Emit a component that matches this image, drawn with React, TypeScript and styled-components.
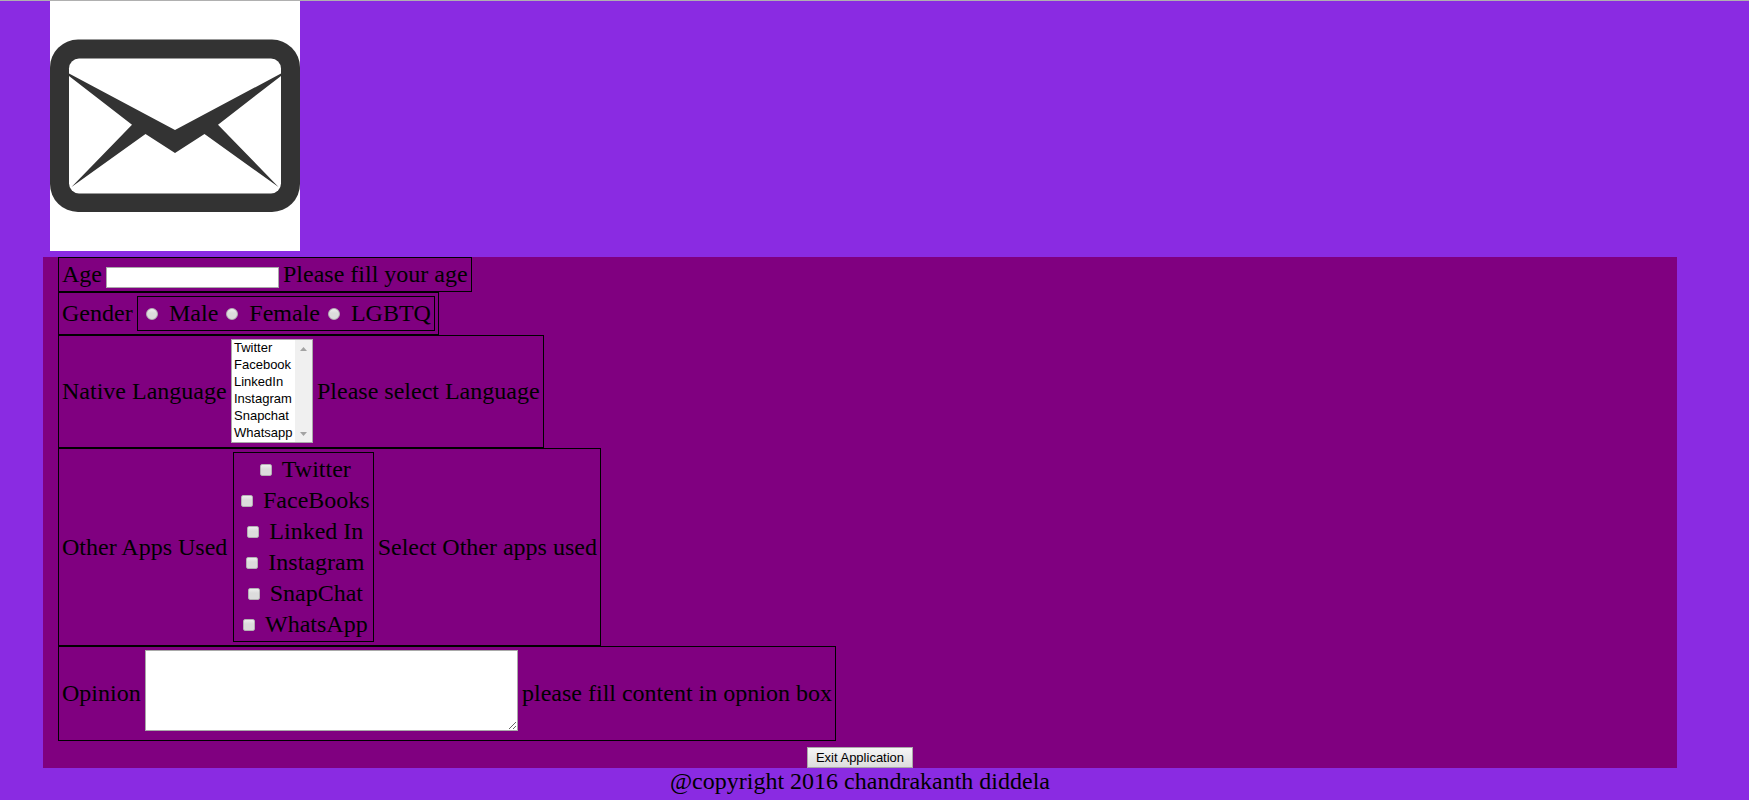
import React from 'react';
import styled, { createGlobalStyle } from 'styled-components';

const GlobalStyle = createGlobalStyle`
  *, *::before, *::after { box-sizing: border-box; }
  body {
    margin: 0;
    background: #8a2be2;
    color: #000;
    font-family: "Liberation Serif", "Times New Roman", serif;
    font-size: 24px;
    line-height: 27px;
  }
`;

const Page = styled.div`
  min-height: 100vh;
  padding: 0 72px 0 43px;
  border-top: 1px solid #b0b0b0;
`;

const Header = styled.header`
  padding: 0 7px 6px;
`;

const Logo = styled.svg`
  display: block;
  width: 250px;
  height: 250px;
  background: #fff;
`;

const Form = styled.form`
  display: flex;
  flex-direction: column;
  align-items: flex-start;
  padding-left: 15px;
  background: #800080;
`;

const Row = styled.div<{ $align?: string }>`
  display: flex;
  align-items: ${(p) => p.$align ?? 'center'};
  gap: 4px;
  padding: 3px;
  border: 1px solid #000;
  white-space: nowrap;
`;

const Prompt = styled.label<{ $width: number }>`
  min-width: ${(p) => p.$width}px;
`;

const ChoiceBox = styled.div<{ $vertical?: boolean }>`
  display: flex;
  flex-direction: ${(p) => (p.$vertical ? 'column' : 'row')};
  align-items: center;
  gap: ${(p) => (p.$vertical ? 4 : 3)}px;
  padding: 3px;
  border: 1px solid #000;
`;

const Choice = styled.label`
  display: flex;
  align-items: center;
`;

const Mark = styled.input`
  appearance: none;
  width: 12px;
  height: 12px;
  border: 1px solid #b4b0b4;
  background: linear-gradient(#eee, #dcdcdc 40%);
`;

const Radio = styled(Mark)`
  margin: 1px 11px 0 5px;
  border-radius: 50%;
`;

const Check = styled(Mark)`
  margin: 1px 10px 0 4px;
  border-radius: 2px;
`;

const TextInput = styled.input`
  width: 173px;
  height: 21px;
  padding: 1px;
  border: 1px solid #a9a9a9;
  background: #fff;
  font: 13px "Liberation Sans", Arial, sans-serif;
`;

const ListFrame = styled.div`
  display: flex;
  width: 82px;
  height: 104px;
  margin-bottom: 1px;
  border: 1px solid #a9a9a9;
  background: #fff;
`;

const List = styled.select`
  appearance: none;
  flex: 1;
  min-width: 0;
  height: 102px;
  margin: 0;
  padding: 0;
  border: 0;
  border-radius: 0;
  background: #fff;
  color: #000;
  font: 13px "Liberation Sans", Arial, sans-serif;
  overflow: hidden;
  outline: 0;

  option {
    height: 17px;
    min-height: 17px;
    padding: 0 0 0 2px;
    line-height: 16px;
  }
`;

const ScrollTrack = styled.svg`
  flex: none;
  width: 17px;
  height: 102px;
  background: #f0f0f0;
`;

const TextBox = styled.textarea`
  display: block;
  width: 373px;
  height: 81px;
  margin: 0 0 6px;
  padding: 2px;
  border: 1px solid #a9a9a9;
  background: #fff;
  font: 13px "Liberation Sans", Arial, sans-serif;
  resize: both;
`;

const ExitButton = styled.button`
  align-self: center;
  height: 21px;
  margin: 6px 15px 0 0;
  padding: 0 8px;
  border: 1px solid #a9a9a9;
  background: linear-gradient(#f6f6f6, #dddddd);
  color: #000;
  font: 13px "Liberation Sans", Arial, sans-serif;
`;

const Footer = styled.footer`
  text-align: center;
`;

const languages = ['Twitter', 'Facebook', 'LinkedIn', 'Instagram', 'Snapchat', 'Whatsapp'];
const genders = ['Male', 'Female', 'LGBTQ'];
const apps = ['Twitter', 'FaceBooks', 'Linked In', 'Instagram', 'SnapChat', 'WhatsApp'];

export default function App() {
  return (
    <>
      <GlobalStyle />
      <Page>
        <Header>
          <Logo viewBox="0 0 250 250" role="img" aria-label="Envelope">
            <rect y="38.5" width="250" height="172.5" rx="28" fill="#333" />
            <rect x="19" y="57.5" width="212" height="135" rx="10" fill="#fff" />
            <path
              d="M19 72.5 125 129 231 72.5V75L168 123.7 228.5 186 154.5 133 125 152 95.5 133 21.5 186 82 123.7 19 75Z"
              fill="#333"
            />
          </Logo>
        </Header>
        <Form onSubmit={(e) => e.preventDefault()}>
          <Row $align="flex-end">
            <Prompt $width={40} htmlFor="age">Age</Prompt>
            <TextInput id="age" type="text" />
            <span>Please fill your age</span>
          </Row>
          <Row>
            <Prompt as="span" $width={71} id="gender">Gender</Prompt>
            <ChoiceBox role="radiogroup" aria-labelledby="gender">
              {genders.map((name) => (
                <Choice key={name}>
                  <Radio type="radio" name="gender" value={name} />
                  {name}
                </Choice>
              ))}
            </ChoiceBox>
          </Row>
          <Row>
            <Prompt $width={165} htmlFor="language">Native Language</Prompt>
            <ListFrame>
              <List id="language" size={6} multiple>
                {languages.map((name) => (
                  <option key={name}>{name}</option>
                ))}
              </List>
              <ScrollTrack viewBox="0 0 17 102" aria-hidden="true">
                <path d="M5 11 8.5 7 12 11ZM5 92 8.5 96 12 92Z" fill="#a3a3a3" />
              </ScrollTrack>
            </ListFrame>
            <span>Please select Language</span>
          </Row>
          <Row>
            <Prompt as="span" $width={167} id="apps">Other Apps Used</Prompt>
            <ChoiceBox $vertical role="group" aria-labelledby="apps">
              {apps.map((name) => (
                <Choice key={name}>
                  <Check type="checkbox" name="apps" value={name} />
                  {name}
                </Choice>
              ))}
            </ChoiceBox>
            <span>Select Other apps used</span>
          </Row>
          <Row>
            <Prompt $width={79} htmlFor="opinion">Opinion</Prompt>
            <TextBox id="opinion" />
            <span>please fill content in opnion box</span>
          </Row>
          <ExitButton type="submit">Exit Application</ExitButton>
        </Form>
        <Footer>@copyright 2016 chandrakanth diddela</Footer>
      </Page>
    </>
  );
}
